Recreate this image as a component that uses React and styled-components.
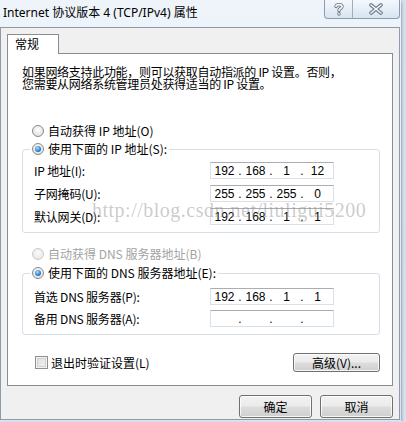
import { Fragment } from "react";
import styled, { createGlobalStyle } from "styled-components";

const GlobalStyle = createGlobalStyle`
  body {
    margin: 0;
    background: #d3e1ef;
    font-family: "Noto Sans CJK SC", "Noto Sans", sans-serif;
    font-size: 12px;
    color: #000;
  }
`;

const Window = styled.div`
  position: relative;
  width: 401px;
  height: 421px;
  display: flex;
  flex-direction: column;
  background: linear-gradient(180deg, #eef4fa 0%, #e2ecf6 60%, #d9e5f1 100%);
  box-shadow: 0 2px 3px rgba(0, 0, 0, 0.5);
`;

const TitleBar = styled.div`
  height: 27px;
  display: flex;
  justify-content: space-between;
  align-items: flex-start;
`;

const Title = styled.div`
  padding: 5px 0 0 3px;
  font-family: "Noto Sans", "Noto Sans CJK SC", sans-serif;
  font-size: 12px;
  line-height: 16px;
  color: #000;
`;

const Caption = styled.div`
  display: flex;
  margin-right: 1px;
  height: 18px;
  border: 1px solid #8b9bb0;
  border-top: none;
  border-radius: 0 0 4px 4px;
  background: linear-gradient(180deg, #f4f8fc 0%, #e6eef7 50%, #d9e4f0 100%);
  overflow: hidden;
`;

const CaptionButton = styled.div`
  width: ${(p) => p.w}px;
  display: flex;
  align-items: center;
  justify-content: center;
  & + & {
    border-left: 1px solid #9eadc0;
  }
`;

const Client = styled.div`
  flex: 1;
  margin: 0 1px 1px 0;
  background: #f0f0f0;
  border: 1px solid #8e9aa8;
  padding: 6px 6px 0 6px;
  display: flex;
  flex-direction: column;
`;

const Tab = styled.div`
  position: relative;
  z-index: 1;
  width: 52px;
  height: 20px;
  margin-bottom: -1px;
  box-sizing: border-box;
  background: #fff;
  border: 1px solid #898c95;
  border-bottom: none;
  padding-left: 7px;
  line-height: 18px;
  font-size: 12px;
`;

const Panel = styled.div`
  height: 333px;
  box-sizing: border-box;
  background: #fff;
  border: 1px solid #898c95;
  padding: 12px 12px 0 14px;
  display: flex;
  flex-direction: column;
`;

const Description = styled.div`
  line-height: 12px;
  font-size: 12px;
  letter-spacing: -0.3px;
`;

const OptionRow = styled.div`
  display: flex;
  align-items: center;
  gap: 4px;
  height: 16px;
  padding-left: ${(p) => p.indent || 0}px;
  margin-top: ${(p) => p.top || 0}px;
  color: ${(p) => (p.disabled ? "#a3a3a3" : "#000")};
  line-height: 16px;
`;

const Radio = styled.span`
  position: relative;
  width: 12px;
  height: 12px;
  box-sizing: border-box;
  border-radius: 50%;
  border: 1px solid ${(p) => (p.disabled ? "#c9c9c9" : "#8a8a8a")};
  background: ${(p) =>
    p.disabled
      ? "radial-gradient(circle at 50% 40%, #fafafa, #e4e4e4)"
      : "radial-gradient(circle at 50% 40%, #ffffff, #d9d9d9)"};
  flex-shrink: 0;
  &::after {
    content: "";
    display: ${(p) => (p.checked ? "block" : "none")};
    position: absolute;
    left: 2px;
    top: 2px;
    width: 6px;
    height: 6px;
    border-radius: 50%;
    background: radial-gradient(circle at 40% 35%, #a8e0ff, #2f86d6 55%, #10427f);
  }
`;

const Group = styled.fieldset`
  margin: ${(p) => p.top}px 0 0 0;
  padding: ${(p) => p.pt}px 0 7px 11px;
  border: 1px solid #d5dfe5;
  border-radius: 3px;
  display: flex;
  flex-direction: column;
  gap: ${(p) => p.gap}px;
`;

const Legend = styled.legend`
  margin-left: -4px;
  padding: 0 2px;
`;

const FieldRow = styled.div`
  display: flex;
  align-items: center;
  height: 17px;
`;

const FieldLabel = styled.div`
  width: 176px;
  letter-spacing: -0.2px;
`;

const IpBox = styled.div`
  width: 124px;
  height: 17px;
  box-sizing: border-box;
  border: 1px solid #dbdfe6;
  border-top-color: #abadb3;
  display: flex;
  align-items: center;
  padding: 0 2px 0 0;
  font-family: "Liberation Sans", "DejaVu Sans", sans-serif;
  font-size: 12px;
  color: #000;
`;

const Octet = styled.span`
  flex: 1;
  text-align: center;
`;

const Dot = styled.span`
  width: 4px;
  text-align: center;
`;

const BottomRow = styled.div`
  display: flex;
  align-items: center;
  justify-content: space-between;
  margin-top: 18px;
  padding-left: 13px;
`;

const CheckLabel = styled.div`
  display: flex;
  align-items: center;
  gap: 3px;
`;

const Checkbox = styled.span`
  width: 13px;
  height: 13px;
  box-sizing: border-box;
  border: 1px solid #8f8f8f;
  background: linear-gradient(135deg, #dcdcdc, #f4f4f4);
  box-shadow: inset 0 0 0 1px #f4f4f4, inset 0 0 0 2px #d0d0d0;
`;

const Button = styled.div`
  width: ${(p) => p.w}px;
  height: ${(p) => p.h}px;
  box-sizing: border-box;
  border: 1px solid #707070;
  border-radius: 3px;
  background: linear-gradient(180deg, #f2f2f2 0%, #ebebeb 48%, #dddddd 52%, #cfcfcf 100%);
  box-shadow: inset 0 0 0 1px rgba(255, 255, 255, 0.8);
  display: flex;
  align-items: center;
  justify-content: center;
  font-size: 12px;
  color: #000;
`;

const Footer = styled.div`
  display: flex;
  justify-content: flex-end;
  gap: 8px;
  margin-top: 9px;
`;

const Watermark = styled.div`
  position: absolute;
  left: 92px;
  top: 199px;
  font-family: "Liberation Serif", serif;
  font-size: 20px;
  letter-spacing: 0.5px;
  color: rgba(140, 140, 140, 0.45);
  pointer-events: none;
  white-space: nowrap;
`;

function HelpIcon() {
  return (
    <svg width="12" height="14" viewBox="0 0 12 14">
      <path
        d="M3 4.5 C3 2 9 2 9 4.5 C9 6.5 6 6.5 6 8.5 M6 11.5 L6 12"
        fill="none"
        stroke="#6e7a88"
        strokeWidth="3.4"
        strokeLinecap="round"
      />
      <path
        d="M3 4.5 C3 2 9 2 9 4.5 C9 6.5 6 6.5 6 8.5 M6 11.5 L6 12"
        fill="none"
        stroke="#f5f8fb"
        strokeWidth="1.6"
        strokeLinecap="round"
      />
    </svg>
  );
}

function CloseIcon() {
  return (
    <svg width="16" height="12" viewBox="0 0 16 12">
      <path d="M3 2 L13 10 M13 2 L3 10" stroke="#6e7a88" strokeWidth="3.6" strokeLinecap="round" />
      <path d="M3 2 L13 10 M13 2 L3 10" stroke="#f5f8fb" strokeWidth="1.6" strokeLinecap="round" />
    </svg>
  );
}

function IpField({ value }) {
  const parts = value ? value.split(".") : ["", "", "", ""];
  return (
    <IpBox>
      {parts.map((p, i) => (
        <Fragment key={i}>
          {i > 0 && <Dot>.</Dot>}
          <Octet>{p}</Octet>
        </Fragment>
      ))}
    </IpBox>
  );
}

const ipRows = [
  ["IP 地址(I):", "192.168.1.12"],
  ["子网掩码(U):", "255.255.255.0"],
  ["默认网关(D):", "192.168.1.1"],
];

const dnsRows = [
  ["首选 DNS 服务器(P):", "192.168.1.1"],
  ["备用 DNS 服务器(A):", ""],
];

export default function App() {
  return (
    <>
      <GlobalStyle />
      <Window>
        <TitleBar>
          <Title>Internet 协议版本 4 (TCP/IPv4) 属性</Title>
          <Caption>
            <CaptionButton w={27}>
              <HelpIcon />
            </CaptionButton>
            <CaptionButton w={46}>
              <CloseIcon />
            </CaptionButton>
          </Caption>
        </TitleBar>
        <Client>
          <Tab>常规</Tab>
          <Panel>
            <Description>
              如果网络支持此功能，则可以获取自动指派的 IP 设置。否则，
              <br />
              您需要从网络系统管理员处获得适当的 IP 设置。
            </Description>
            <OptionRow indent={10} top={33}>
              <Radio />
              自动获得 IP 地址(O)
            </OptionRow>
            <Group top={2} pt={5} gap={6}>
              <Legend>
                <OptionRow>
                  <Radio checked />
                  使用下面的 IP 地址(S):
                </OptionRow>
              </Legend>
              {ipRows.map(([label, ip]) => (
                <FieldRow key={label}>
                  <FieldLabel>{label}</FieldLabel>
                  <IpField value={ip} />
                </FieldRow>
              ))}
            </Group>
            <OptionRow indent={10} top={13} disabled>
              <Radio disabled />
              自动获得 DNS 服务器地址(B)
            </OptionRow>
            <Group top={3} pt={7} gap={5}>
              <Legend>
                <OptionRow>
                  <Radio checked />
                  使用下面的 DNS 服务器地址(E):
                </OptionRow>
              </Legend>
              {dnsRows.map(([label, ip]) => (
                <FieldRow key={label}>
                  <FieldLabel>{label}</FieldLabel>
                  <IpField value={ip} />
                </FieldRow>
              ))}
            </Group>
            <BottomRow>
              <CheckLabel>
                <Checkbox />
                退出时验证设置(L)
              </CheckLabel>
              <Button w={87} h={19}>
                高级(V)...
              </Button>
            </BottomRow>
          </Panel>
          <Footer>
            <Button w={73} h={23}>
              确定
            </Button>
            <Button w={73} h={23}>
              取消
            </Button>
          </Footer>
        </Client>
        <Watermark>http://blog.csdn.net/liuligui5200</Watermark>
      </Window>
    </>
  );
}
